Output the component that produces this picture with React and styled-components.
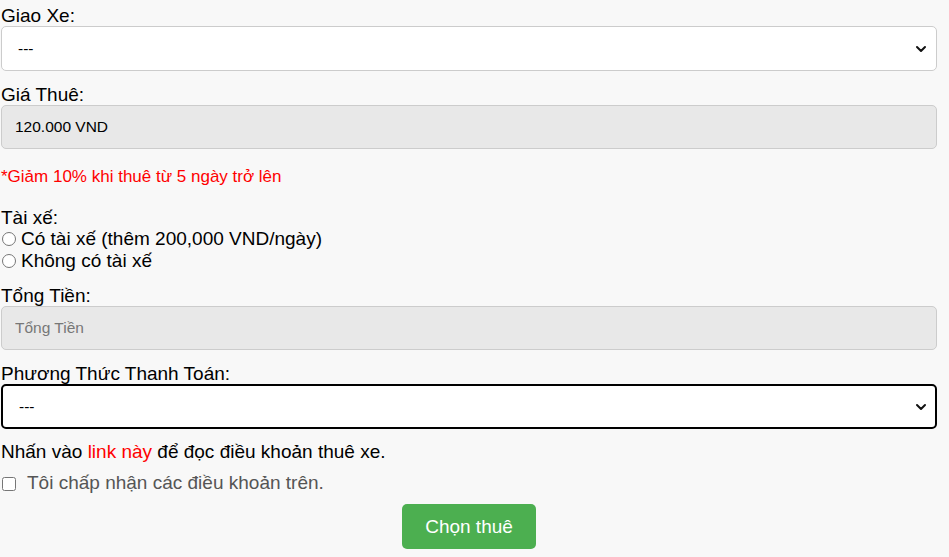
import React from 'react'
import styled, { createGlobalStyle } from 'styled-components'
import { ChevronDown } from 'lucide-react'

const GlobalStyle = createGlobalStyle`
  html, body {
    margin: 0;
    padding: 0;
    background: #f8f8f8;
  }
  body {
    font-family: "Liberation Sans", Arial, sans-serif;
    color: #000;
  }
`

const Form = styled.form`
  width: 936px;
  padding: 5px 0 0 1px;
`

const Label = styled.label`
  display: block;
  font-size: 19px;
  line-height: 21px;
`

const SelectWrap = styled.div`
  position: relative;
  margin-bottom: ${props => props.gap ?? 13}px;
  & > svg {
    position: absolute;
    top: 50%;
    right: 8px;
    transform: translateY(-50%);
    pointer-events: none;
  }
`

const Select = styled.select`
  display: block;
  width: 100%;
  height: 45px;
  margin: 0;
  padding: 0 14px 0 16px;
  font-family: "Liberation Sans", Arial, sans-serif;
  font-size: 15.5px;
  color: #000;
  background: #fff;
  border: ${props => props.focused ? '2px solid #000' : '1px solid #ccc'};
  border-radius: 5px;
  outline: none;
  box-sizing: border-box;
  appearance: none;
  -webkit-appearance: none;
`

const Field = styled.input`
  display: block;
  width: 100%;
  height: 44px;
  margin: 0;
  padding: 0 13px;
  font-family: "Liberation Sans", Arial, sans-serif;
  font-size: 15.5px;
  color: #000;
  background: #e8e8e8;
  border: 1px solid #ccc;
  border-radius: 5px;
  box-sizing: border-box;
  &::placeholder {
    color: #777;
  }
`

const Note = styled.p`
  margin: 19px 0 21px;
  font-size: 17px;
  line-height: 18px;
  color: #ff0000;
`

const Choice = styled.label`
  display: flex;
  align-items: center;
  font-size: 19px;
  line-height: 22px;
`

const Radio = styled.input`
  width: 14px;
  height: 14px;
  margin: 0 5px 0 1px;
`

const Group = styled.div`
  margin-bottom: 13px;
`

const Terms = styled.p`
  margin: 12px 0 10px;
  font-size: 19px;
  line-height: 21px;
`

const TermsLink = styled.a`
  color: #ff0000;
  text-decoration: none;
`

const Agree = styled.label`
  display: flex;
  align-items: center;
  font-size: 19px;
  line-height: 22px;
  color: #555;
`

const Check = styled.input`
  width: 14px;
  height: 14px;
  margin: 1px 11px 0 1px;
`

const Actions = styled.div`
  display: flex;
  justify-content: center;
  margin-top: 10px;
`

const Button = styled.button`
  height: 45px;
  padding: 0 23px;
  font-family: "Liberation Sans", Arial, sans-serif;
  font-size: 19px;
  color: #fff;
  background: #4caf50;
  border: none;
  border-radius: 5px;
  cursor: pointer;
`

export default function App() {
  return (
    <>
      <GlobalStyle />
      <Form onSubmit={e => e.preventDefault()}>
        <Label htmlFor="giao-xe">Giao Xe:</Label>
        <SelectWrap>
          <Select id="giao-xe">
            <option>---</option>
          </Select>
          <ChevronDown size={16} strokeWidth={3} color="#111" />
        </SelectWrap>

        <Label htmlFor="gia-thue">Giá Thuê:</Label>
        <Field id="gia-thue" readOnly value="120.000 VND" />

        <Note>*Giảm 10% khi thuê từ 5 ngày trở lên</Note>

        <Group>
          <Label as="div">Tài xế:</Label>
          <Choice>
            <Radio type="radio" name="tai-xe" />
            Có tài xế (thêm 200,000 VND/ngày)
          </Choice>
          <Choice>
            <Radio type="radio" name="tai-xe" />
            Không có tài xế
          </Choice>
        </Group>

        <Label htmlFor="tong-tien">Tổng Tiền:</Label>
        <Field id="tong-tien" readOnly placeholder="Tổng Tiền" />

        <Label htmlFor="thanh-toan" style={{ marginTop: 13 }}>Phương Thức Thanh Toán:</Label>
        <SelectWrap gap={0}>
          <Select id="thanh-toan" focused>
            <option>---</option>
          </Select>
          <ChevronDown size={16} strokeWidth={3} color="#111" />
        </SelectWrap>

        <Terms>
          Nhấn vào <TermsLink href="#">link này</TermsLink> để đọc điều khoản thuê xe.
        </Terms>

        <Agree>
          <Check type="checkbox" />
          Tôi chấp nhận các điều khoản trên.
        </Agree>

        <Actions>
          <Button type="submit">Chọn thuê</Button>
        </Actions>
      </Form>
    </>
  )
}
